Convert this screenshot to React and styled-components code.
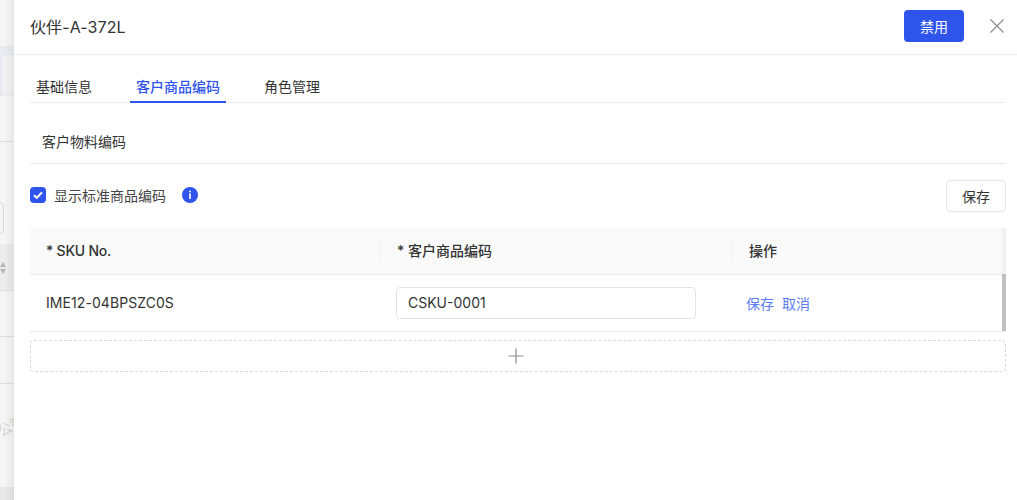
import React from "react";
import styled, { createGlobalStyle } from "styled-components";

const GlobalStyle = createGlobalStyle`
  html, body {
    margin: 0;
    padding: 0;
    background: #fff;
  }
  body {
    font-family: Inter, "Noto Sans CJK SC", sans-serif;
    color: #333;
  }
`;

const Page = styled.div`
  position: relative;
  display: flex;
  width: 1017px;
  height: 500px;
  overflow: hidden;
`;

const Backdrop = styled.div`
  position: relative;
  width: 14px;
  flex: none;
  overflow: hidden;
  background: #f5f5f5;

  &::after {
    content: "";
    position: absolute;
    inset: 0;
    background: linear-gradient(to right, rgba(0, 0, 0, 0) 30%, rgba(0, 0, 0, 0.06));
  }
`;

const BackBand = styled.div`
  position: absolute;
  left: 0;
  right: 0;
  top: ${(p) => p.$top}px;
  height: ${(p) => p.$height}px;
  background: ${(p) => p.$bg || "transparent"};
  border-bottom: ${(p) => (p.$line ? "1px solid #dedede" : "none")};
`;

const BackCard = styled.div`
  position: absolute;
  left: 3px;
  right: 0;
  top: 55px;
  height: 40px;
  background: #f2f2f2;
  border-top-left-radius: 4px;
`;

const BackInput = styled.div`
  position: absolute;
  left: -8px;
  top: 202px;
  width: 10px;
  height: 30px;
  border: 1px solid #d9d9d9;
  border-radius: 4px;
`;

const BackSort = styled.svg`
  position: absolute;
  left: 0;
  top: 262px;
`;

const Watermark = styled.span`
  position: absolute;
  left: -3px;
  top: 416px;
  font-size: 14px;
  line-height: 20px;
  color: #d4d4d4;
  transform: rotate(-30deg);
  white-space: nowrap;
`;

const Drawer = styled.main`
  flex: 1;
  min-width: 0;
  background: #fff;
  display: flex;
  flex-direction: column;
`;

const Header = styled.header`
  height: 55px;
  box-sizing: border-box;
  border-bottom: 1px solid #ececec;
  display: flex;
  align-items: center;
  padding: 0 12px 2px 16px;
`;

const Title = styled.h1`
  flex: 1;
  margin: 0;
  font-size: 16px;
  font-weight: 400;
  letter-spacing: 0.1px;
  color: #333;
`;

const PrimaryButton = styled.button`
  width: 60px;
  height: 32px;
  margin-right: 25px;
  border: none;
  border-radius: 4px;
  background: #2f54eb;
  color: #fff;
  font: inherit;
  font-size: 14px;
`;

const CloseButton = styled.button`
  display: flex;
  padding: 0;
  border: none;
  background: none;
  color: #8c8c8c;
`;

const Body = styled.div`
  padding: 0 11px 0 16px;
`;

const Tabs = styled.nav`
  height: 48px;
  box-sizing: border-box;
  display: flex;
  align-items: flex-end;
  gap: 32px;
  border-bottom: 1px solid #ececec;
`;

const Tab = styled.div`
  height: 27px;
  padding: 0 6px;
  margin-bottom: -1px;
  font-size: 14px;
  line-height: 22px;
  color: ${(p) => (p.$active ? "#2f54eb" : "#333")};
  font-weight: ${(p) => (p.$active ? 500 : 400)};
  border-bottom: 2px solid ${(p) => (p.$active ? "#2f54eb" : "transparent")};
  box-sizing: border-box;
`;

const SectionTitle = styled.div`
  height: 61px;
  padding: 16px 12px 0;
  display: flex;
  align-items: center;
  font-size: 14px;
  border-bottom: 1px solid #ececec;
  box-sizing: border-box;
`;

const Toolbar = styled.div`
  height: 64px;
  display: flex;
  align-items: center;
  justify-content: space-between;
`;

const CheckLabel = styled.label`
  display: flex;
  align-items: center;
  padding-bottom: 2px;
  font-size: 14px;
  color: #444;
`;

const CheckBox = styled.span`
  width: 16px;
  height: 16px;
  border-radius: 4px;
  background: #2f54eb;
  margin-right: 8px;
  display: flex;
`;

const InfoIcon = styled.svg`
  margin-left: 16px;
`;

const OutlineButton = styled.button`
  width: 60px;
  height: 32px;
  border: 1px solid #e4e4e4;
  border-radius: 4px;
  background: #fff;
  color: #333;
  font: inherit;
  font-size: 14px;
`;

const Table = styled.div`
  position: relative;
`;

const HeadRow = styled.div`
  height: 47px;
  padding-bottom: 2px;
  display: grid;
  grid-template-columns: 350px 352px 1fr;
  align-items: center;
  background: #fafafa;
  border-bottom: 1px solid #e8e8e8;
  box-sizing: border-box;
`;

const HeadCell = styled.div`
  position: relative;
  padding-left: 17px;
  font-size: 14px;
  font-weight: 500;
  color: #333;

  &:not(:first-child)::before {
    content: "";
    position: absolute;
    left: 0;
    top: 0;
    bottom: 0;
    margin: auto 0;
    height: 22px;
    width: 1px;
    background: #f0f0f0;
  }
`;

const SkuHead = styled(HeadCell)`
  padding-left: 16px;
  letter-spacing: -0.22px;
`;

const BodyRow = styled.div`
  height: 57px;
  display: grid;
  grid-template-columns: 350px 352px 1fr;
  align-items: center;
  border-bottom: 1px solid #e8e8e8;
  box-sizing: border-box;
`;

const Cell = styled.div`
  padding-left: 16px;
  font-size: 14px;
  color: #333;
`;

const SkuText = styled(Cell)`
  padding-bottom: 2px;
  letter-spacing: 0.07px;
`;

const CodeInput = styled.input`
  display: block;
  width: 300px;
  height: 32px;
  box-sizing: border-box;
  border: 1px solid #e4e4e4;
  border-radius: 4px;
  padding: 0 11px 2px;
  font: inherit;
  font-size: 14px;
  color: #333;
  outline: none;
`;

const Links = styled.div`
  display: flex;
  gap: 8px;
  padding-left: 14px;
`;

const LinkText = styled.a`
  font-size: 14px;
  color: #5b7cf5;
`;

const Scrollbar = styled.div`
  position: absolute;
  right: 0;
  top: 46px;
  width: 4px;
  height: 57px;
  background: #c1c1c1;
`;

const HeadFade = styled.div`
  position: absolute;
  right: 0;
  top: 0;
  width: 6px;
  height: 46px;
  background: linear-gradient(to right, #fafafa, #ececec);
`;

const AddRow = styled.button`
  width: 100%;
  height: 32px;
  margin-top: 8px;
  padding: 0 4px 0 0;
  border: 1px dashed #d9d9d9;
  border-radius: 4px;
  background: #fff;
  color: #8c8c8c;
  display: flex;
  align-items: center;
  justify-content: center;
`;

export default function App() {
  return (
    <>
      <GlobalStyle />
      <Page>
        <Backdrop>
          <BackBand $top={46} $height={50} $bg="#e8ecf1" />
          <BackCard />
          <BackBand $top={96} $height={45} $line />
          <BackInput />
          <BackBand $top={244} $height={46} $bg="#ececec" $line />
          <BackSort width="6" height="12" viewBox="0 0 6 12" fill="#b5b5b5">
            <path d="M0 5l3-5 3 5zM0 7l3 5 3-5z" />
          </BackSort>
          <BackBand $top={291} $height={45} $line />
          <BackBand $top={337} $height={46} $line />
          <Watermark>公司</Watermark>
          <BackBand $top={487} $height={13} $bg="#e8e8e8" />
        </Backdrop>
        <Drawer>
          <Header>
            <Title>伙伴-A-372L</Title>
            <PrimaryButton>禁用</PrimaryButton>
            <CloseButton aria-label="关闭">
              <svg width="16" height="16" viewBox="0 0 16 16" fill="none" stroke="currentColor" strokeWidth="1.2">
                <path d="M1.5 1.5l13 13M14.5 1.5l-13 13" />
              </svg>
            </CloseButton>
          </Header>
          <Body>
            <Tabs>
              <Tab>基础信息</Tab>
              <Tab $active>客户商品编码</Tab>
              <Tab>角色管理</Tab>
            </Tabs>
            <SectionTitle>客户物料编码</SectionTitle>
            <Toolbar>
              <CheckLabel>
                <CheckBox>
                  <svg width="16" height="16" viewBox="0 0 16 16" fill="none" stroke="#fff" strokeWidth="2">
                    <path d="M4 8.2l2.8 2.6L12 5.4" />
                  </svg>
                </CheckBox>
                显示标准商品编码
                <InfoIcon width="16" height="16" viewBox="0 0 16 16">
                  <circle cx="8" cy="8" r="8" fill="#2f54eb" />
                  <rect x="7.2" y="3.6" width="1.6" height="1.7" fill="#fff" />
                  <rect x="7.2" y="6.4" width="1.6" height="5.6" fill="#fff" />
                </InfoIcon>
              </CheckLabel>
              <OutlineButton>保存</OutlineButton>
            </Toolbar>
            <Table>
              <HeadRow>
                <SkuHead>* SKU No.</SkuHead>
                <HeadCell>* 客户商品编码</HeadCell>
                <HeadCell>操作</HeadCell>
              </HeadRow>
              <BodyRow>
                <SkuText>IME12-04BPSZC0S</SkuText>
                <Cell>
                  <CodeInput defaultValue="CSKU-0001" />
                </Cell>
                <Links>
                  <LinkText>保存</LinkText>
                  <LinkText>取消</LinkText>
                </Links>
              </BodyRow>
              <HeadFade />
              <Scrollbar />
            </Table>
            <AddRow aria-label="添加">
              <svg width="16" height="16" viewBox="0 0 16 16" fill="none" stroke="currentColor" strokeWidth="1.2">
                <path d="M8 .5v15M.5 8h15" />
              </svg>
            </AddRow>
          </Body>
        </Drawer>
      </Page>
    </>
  );
}
